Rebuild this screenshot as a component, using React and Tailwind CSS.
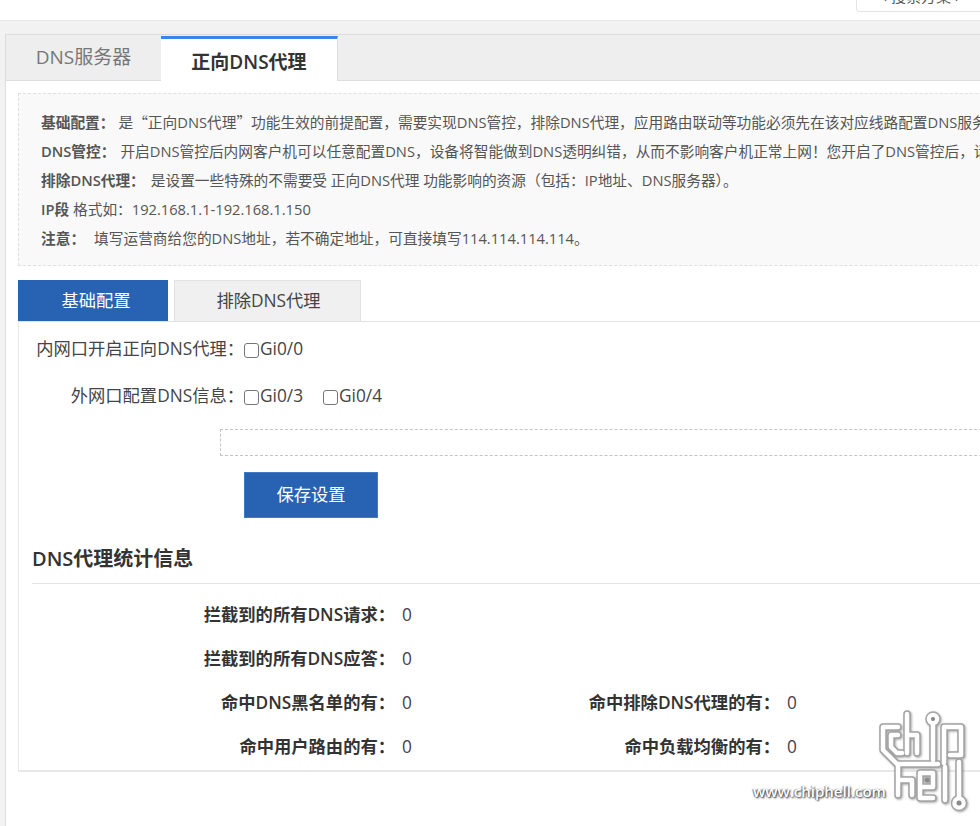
import React from "react";

const Label = ({ children }) => <b className="font-semibold">{children}</b>;

const Quote = ({ children }) => <span className="[font-family:'Noto_Sans_CJK_SC',sans-serif]">{children}</span>;

const Stat = ({ label, value, w }) => (
  <div className="flex items-center">
    <span className={`${w} shrink-0 text-right font-semibold text-[#333]`}>{label}</span>
    <span className="ml-[7px] w-[16px] text-[#444]">{value}</span>
  </div>
);

const Box = ({ label }) => (
  <label className="flex items-center">
    <span className="mt-[2px] h-[15px] w-[15px] rounded-[3px] border border-[#767676] bg-white" />
    <span className="ml-[1px]">{label}</span>
  </label>
);

const logoPaths = [
  "M28 22H13V45L27 59H68",
  "M28 30H21V42L27 48H32",
  "M37 9V48M37 30H47V48",
  "M63 18V55",
  "M74 58V22H91V50H80",
  "M28 60V90M28 75H42V90",
  "M63 93H50V68H63V82H50",
  "M75 62V95",
  "M89 57V92",
];

const Logo = () => (
  <svg viewBox="0 0 110 110" className="h-[110px] w-[110px]" fill="none" strokeLinecap="round" strokeLinejoin="round">
    <g stroke="#a3a3a3" strokeWidth="7.5">
      {logoPaths.map((d) => <path key={d} d={d} />)}
      <circle cx="63" cy="14" r="4" />
      <circle cx="89" cy="98" r="4.5" />
    </g>
    <g stroke="#ffffff" strokeWidth="4.5">
      {logoPaths.map((d) => <path key={d} d={d} />)}
      <circle cx="63" cy="14" r="4" />
      <circle cx="89" cy="98" r="4.5" />
    </g>
    <circle cx="63" cy="14" r="2" fill="#8a8a8a" />
    <circle cx="89" cy="98" r="2.5" fill="#8a8a8a" />
    <circle cx="57" cy="75" r="2.5" fill="#8a8a8a" />
  </svg>
);

export default function App() {
  return (
    <div className="relative h-[826px] w-[980px] overflow-hidden bg-[#f2f2f2] text-[17.3px] text-[#444] [font-family:'Open_Sans','Noto_Sans_CJK_SC',sans-serif]">
      {/* cut off by the top of the page */}
      <div className="absolute -top-[20px] left-[856px] flex h-[32px] w-[130px] items-center justify-center rounded-[3px] border border-[#e4e4e4] bg-white text-[15px] text-[#555]">
        ‹ 搜索方案 ›
      </div>

      <div className="h-[21px] border-b border-[#e8e8e8] bg-white" />
      <div className="h-[805px] pl-[5px] pt-[13px]">
        <div className="h-[792px] w-[1100px] border-l border-t border-[#dcdcdc] bg-white">
          <div className="flex h-[46px] border-b border-[#dedede] bg-[#eeeeee]">
            <div className="flex w-[155px] items-center justify-center text-[19px] text-[#777]">DNS服务器</div>
            <div className="-mb-px mt-[1px] h-[45px] w-[177px] border-r border-[#dedede] border-t-[3px] border-t-[#3b86e8] bg-white pt-[9px] text-center text-[19px] font-semibold leading-[28px] text-[#333]">
              正向DNS代理
            </div>
          </div>

          <div className="px-[12px] pt-[12px]">
            <div className="h-[173px] border border-dashed border-[#e0e0e0] bg-[#f9f9f9] pl-[22px] pt-[13px] text-[14.7px] leading-[29px] text-[#555] whitespace-nowrap">
              <p><Label>基础配置：</Label><span className="ml-[4px]">是<Quote>“</Quote>正向DNS代理<Quote>”</Quote>功能生效的前提配置，需要实现DNS管控，排除DNS代理，应用路由联动等功能必须先在该对应线路配置DNS服务器</span></p>
              <p><Label>DNS管控：</Label><span className="ml-[5px]">开启DNS管控后内网客户机可以任意配置DNS，设备将智能做到DNS透明纠错，从而不影响客户机正常上网！您开启了DNS管控后，请</span></p>
              <p><Label>排除DNS代理：</Label><span className="ml-[6px]">是设置一些特殊的不需要受 正向DNS代理 功能影响的资源（包括：IP地址、DNS服务器）。</span></p>
              <p><Label>IP段</Label> 格式如：192.168.1.1-192.168.1.150</p>
              <p><Label>注意：</Label><span className="ml-[9px]">填写运营商给您的DNS地址，若不确定地址，可直接填写114.114.114.114。</span></p>
            </div>

            <div className="mt-[14px] flex h-[42px] items-end gap-[6px] border-b border-[#e2e2e2]">
              <div className="flex h-[41px] w-[150px] items-center justify-center bg-[#2862b3] pl-[6px] text-white">基础配置</div>
              <div className="flex h-[41px] w-[187px] items-center justify-center border border-b-0 border-[#e2e2e2] bg-[#f0f0f0] pl-[2px] text-[#444]">排除DNS代理</div>
            </div>

            <div className="h-[450px] border-x border-b-2 border-[#e8e8e8]">
              <div className="flex items-center pt-[15px] leading-[24px]">
                <span className="w-[225px] text-right whitespace-nowrap">内网口开启正向DNS代理：</span>
                <Box label="Gi0/0" />
              </div>
              <div className="mt-[23px] flex items-center leading-[24px]">
                <span className="w-[225px] text-right">外网口配置DNS信息：</span>
                <Box label="Gi0/3" />
                <span className="w-[20px]" />
                <Box label="Gi0/4" />
              </div>
              <div className="ml-[201px] mt-[21px] h-[27px] border border-dashed border-[#c4c4c4]" />
              <button className="ml-[225px] mt-[16px] block h-[46px] w-[134px] border border-[#3d7cc4] bg-[#2862b3] text-white">保存设置</button>

              <h3 className="ml-[13px] mt-[25px] border-b border-[#e6e6e6] pb-[9px] text-[20px] font-semibold leading-[31px] text-[#333]">DNS代理统计信息</h3>

              <div className="mt-[19px] flex flex-col gap-[20px] leading-[24px] whitespace-nowrap">
                <Stat label="拦截到的所有DNS请求：" value="0" w="w-[376px]" />
                <Stat label="拦截到的所有DNS应答：" value="0" w="w-[376px]" />
                <div className="flex">
                  <Stat label="命中DNS黑名单的有：" value="0" w="w-[376px]" />
                  <Stat label="命中排除DNS代理的有：" value="0" w="w-[362px]" />
                </div>
                <div className="flex">
                  <Stat label="命中用户路由的有：" value="0" w="w-[376px]" />
                  <Stat label="命中负载均衡的有：" value="0" w="w-[362px]" />
                </div>
              </div>
            </div>
          </div>
        </div>
      </div>

      {/* forum watermark */}
      <div className="absolute left-[870px] top-[705px] drop-shadow-[1px_1px_1px_rgba(0,0,0,0.35)]">
        <Logo />
      </div>
      <div className="absolute left-[753px] top-[780px] text-[15px] font-semibold text-white [text-shadow:1px_1px_2px_#222,-1px_0_1px_#888]">www.chiphell.com</div>
    </div>
  );
}
